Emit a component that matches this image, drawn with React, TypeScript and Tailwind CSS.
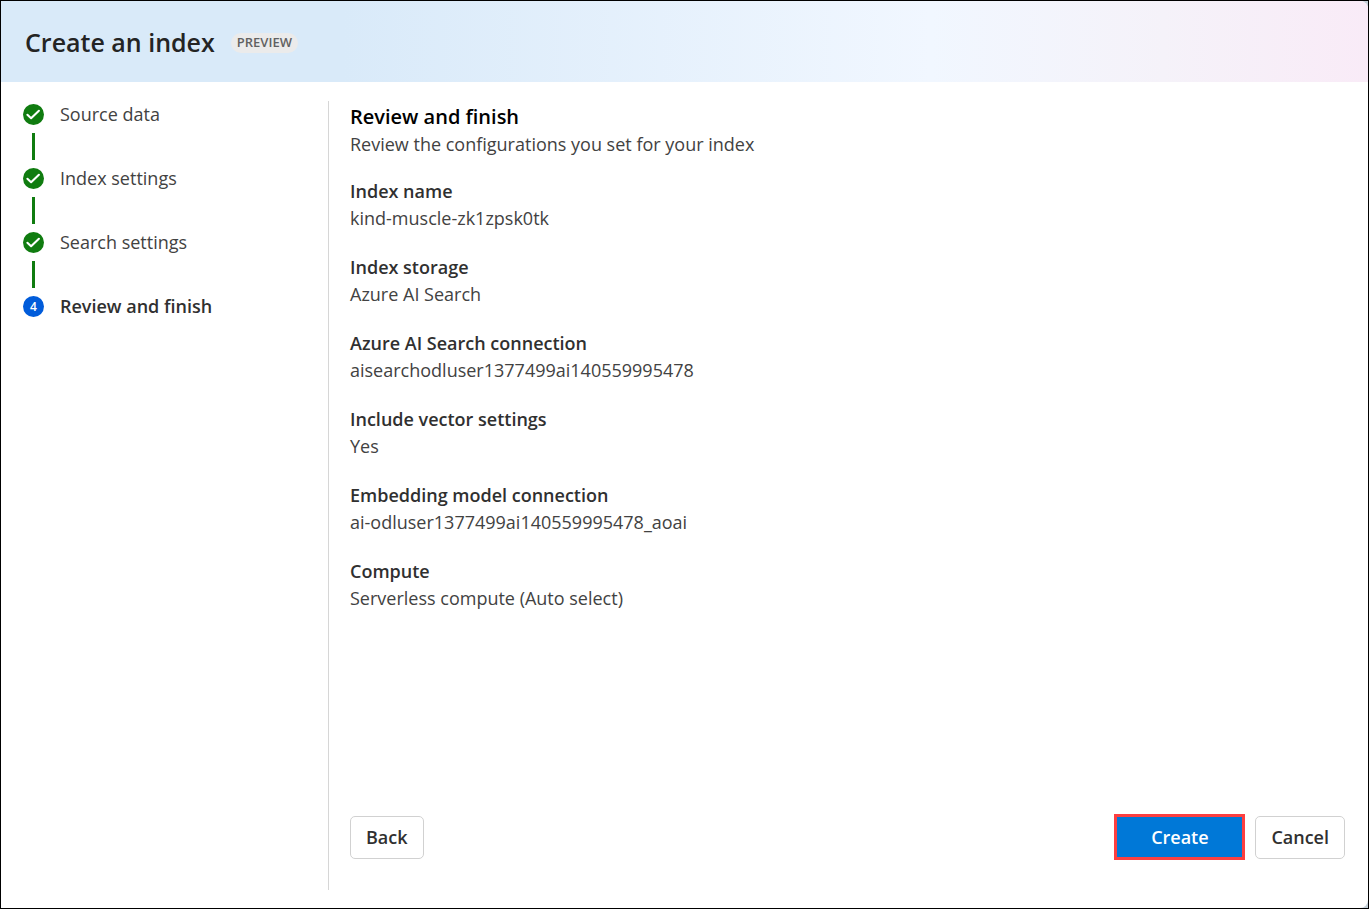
import React from "react";

const steps = ["Source data", "Index settings", "Search settings", "Review and finish"];
const currentStep = 3;

const settings = [
  { label: "Index name", value: "kind-muscle-zk1zpsk0tk" },
  { label: "Index storage", value: "Azure AI Search" },
  { label: "Azure AI Search connection", value: "aisearchodluser1377499ai140559995478" },
  { label: "Include vector settings", value: "Yes" },
  { label: "Embedding model connection", value: "ai-odluser1377499ai140559995478_aoai" },
  { label: "Compute", value: "Serverless compute (Auto select)" },
];

function CheckBadge() {
  return (
    <svg viewBox="0 0 21 21" className="size-[21px]" aria-hidden="true">
      <circle cx="10.5" cy="10.5" r="10.5" fill="#107c10" />
      <path
        d="M4.4 10.8 8.1 14.2 15.9 6.8"
        fill="none"
        stroke="#fff"
        strokeWidth="2.1"
        strokeLinecap="round"
        strokeLinejoin="round"
      />
    </svg>
  );
}

function Stepper() {
  return (
    <nav aria-label="Steps" className="w-[328px] shrink-0 border-r border-[#d6d6d6] pl-[22px]">
      <ol>
        {steps.map((step, i) => (
          <li key={step} className="flex gap-4">
            <div className="flex flex-col items-center">
              <div className="flex h-[27px] items-center">
                {i < currentStep ? (
                  <CheckBadge />
                ) : (
                  <span className="flex size-[21px] items-center justify-center rounded-full bg-[#015cda] text-xs font-semibold text-white">
                    {i + 1}
                  </span>
                )}
              </div>
              {i < currentStep && <div className="my-[5px] h-[27px] w-[3px] bg-[#107c10]" />}
            </div>
            <span
              className={
                i === currentStep
                  ? "text-lg leading-[27px] font-semibold"
                  : "text-lg leading-[27px] font-normal text-[#424242]"
              }
            >
              {step}
            </span>
          </li>
        ))}
      </ol>
    </nav>
  );
}

export default function App() {
  return (
    <div className="flex min-h-screen flex-col border border-black bg-[#c3ced6] font-['Open_Sans','Noto_Sans',sans-serif] text-[#303030]">
      <div className="flex grow flex-col overflow-hidden rounded-r-lg bg-white">
        <header className="flex h-[81px] items-center gap-4 bg-[linear-gradient(to_right,#d9eaf9_25%,#f1f7ff_68%,#f5f2f9_85%,#f9ebf7_100%)] px-6 pt-[2px]">
          <h1 className="text-[25px] font-semibold text-[#242424]">Create an index</h1>
          <span className="flex h-5 items-center rounded-full bg-[#ebebeb] px-1.5 text-[13px] font-semibold text-[#616161]">
            PREVIEW
          </span>
        </header>
        <div className="flex grow pt-[19px] pb-[18px]">
          <Stepper />
          <main className="flex grow flex-col pr-[23px] pb-[30px] pl-[21px]">
            <h2 className="pt-0.5 text-xl leading-7 font-semibold text-black">Review and finish</h2>
            <p className="text-lg leading-[27px] text-[#424242]">
              Review the configurations you set for your index
            </p>
            <dl className="mt-5 flex flex-col gap-[22px]">
              {settings.map(({ label, value }) => (
                <div key={label} className="text-lg leading-[27px]">
                  <dt className="font-semibold">{label}</dt>
                  <dd className="text-[#424242]">{value}</dd>
                </div>
              ))}
            </dl>
            <div className="mt-auto flex items-center">
              <button className="h-[43px] rounded-[5px] border border-[#d1d1d1] bg-white px-[15px] text-lg font-semibold">
                Back
              </button>
              <div className="ml-auto flex items-center gap-2.5">
                <button className="h-[46px] w-[131px] border-3 border-[#fd3f40] bg-[#0078d7] text-lg font-semibold text-white">
                  Create
                </button>
                <button className="h-[43px] rounded-[5px] border border-[#d1d1d1] bg-white px-[15px] text-lg font-semibold">
                  Cancel
                </button>
              </div>
            </div>
          </main>
        </div>
      </div>
    </div>
  );
}
